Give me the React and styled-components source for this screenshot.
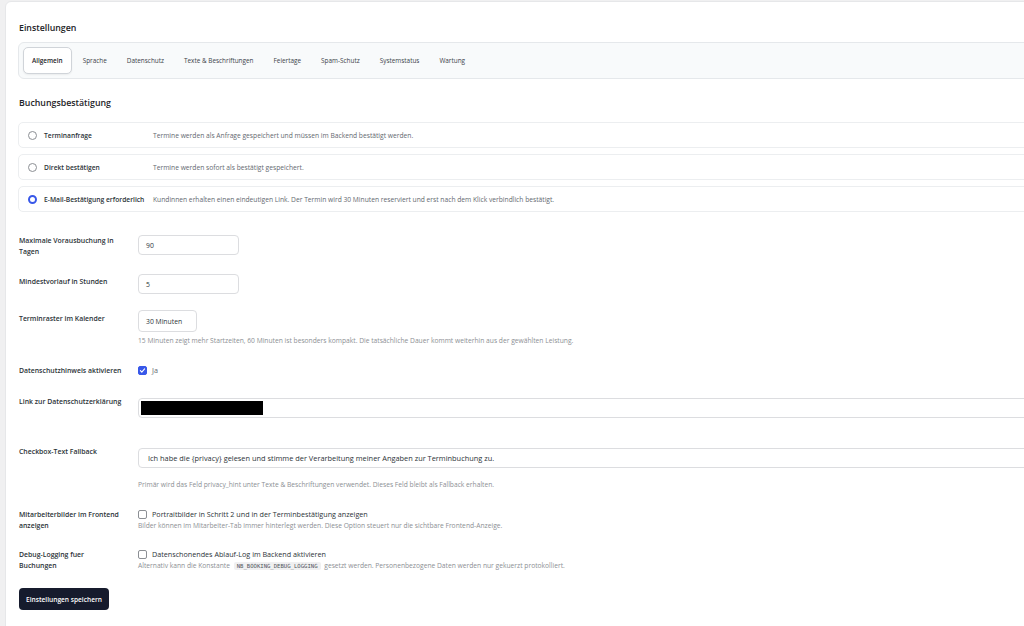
import React from "react";
import styled, { createGlobalStyle } from "styled-components";

const GlobalStyle = createGlobalStyle`
  html, body {
    margin: 0;
    padding: 0;
    background: #f0f0f1;
    overflow: hidden;
  }
  body {
    font-family: "Open Sans", "Noto Sans", sans-serif;
    color: #1d2327;
  }
`;

const tabs = [
  "Allgemein",
  "Sprache",
  "Datenschutz",
  "Texte & Beschriftungen",
  "Feiertage",
  "Spam-Schutz",
  "Systemstatus",
  "Wartung",
];

const modes = [
  {
    title: "Terminanfrage",
    text: "Termine werden als Anfrage gespeichert und müssen im Backend bestätigt werden.",
  },
  {
    title: "Direkt bestätigen",
    text: "Termine werden sofort als bestätigt gespeichert.",
  },
  {
    title: "E-Mail-Bestätigung erforderlich",
    text: "Kundinnen erhalten einen eindeutigen Link. Der Termin wird 30 Minuten reserviert und erst nach dem Klick verbindlich bestätigt.",
    checked: true,
  },
];

const Check = () => (
  <svg width="7" height="7" viewBox="0 0 10 10" fill="none">
    <path d="M2 5.2l2 2L8 2.8" stroke="#fff" strokeWidth="1.6" strokeLinecap="round" strokeLinejoin="round" />
  </svg>
);

export default function App() {
  return (
    <Page>
      <GlobalStyle />
      <Panel>
        <Title>Einstellungen</Title>
        <TabBar>
          {tabs.map((t, i) => (
            <Tab key={t} $active={i === 0}>
              {t}
            </Tab>
          ))}
        </TabBar>

        <SectionTitle>Buchungsbestätigung</SectionTitle>
        <ModeList>
          {modes.map((m) => (
            <ModeCard key={m.title}>
              <Radio $checked={m.checked} />
              <ModeTitle>{m.title}</ModeTitle>
              <ModeText>{m.text}</ModeText>
            </ModeCard>
          ))}
        </ModeList>

        <Form>
          <Row $top={23}>
            <Label>Maximale Vorausbuchung in Tagen</Label>
            <Field>
              <Input $width={101}>90</Input>
            </Field>
          </Row>
          <Row $top={17}>
            <Label $mt={2}>Mindestvorlauf in Stunden</Label>
            <Field>
              <Input $width={101}>5</Input>
            </Field>
          </Row>
          <Row $top={16}>
            <Label $mt={3}>Terminraster im Kalender</Label>
            <Field>
              <Select>30 Minuten</Select>
              <Help $gap={4}>
                15 Minuten zeigt mehr Startzeiten, 60 Minuten ist besonders kompakt. Die tatsächliche Dauer kommt weiterhin aus der gewählten Leistung.
              </Help>
            </Field>
          </Row>
          <Row $top={20}>
            <Label>Datenschutzhinweis aktivieren</Label>
            <Field>
              <CheckLine>
                <Box $checked>
                  <Check />
                </Box>
                <CheckText $muted>Ja</CheckText>
              </CheckLine>
            </Field>
          </Row>
          <Row $top={22}>
            <Label $mt={-2}>Link zur Datenschutzerklärung</Label>
            <Field>
              <Input>
                <Redacted />
              </Input>
            </Field>
          </Row>
          <Row $top={30}>
            <Label $mt={-2}>Checkbox-Text Fallback</Label>
            <Field>
              <Input $pad={9} $wide>
                Ich habe die {"{privacy}"} gelesen und stimme der Verarbeitung meiner Angaben zur Terminbuchung zu.
              </Input>
              <Help $gap={12}>
                Primär wird das Feld privacy_hint unter Texte &amp; Beschriftungen verwendet. Dieses Feld bleibt als Fallback erhalten.
              </Help>
            </Field>
          </Row>
          <Row $top={20}>
            <Label>Mitarbeiterbilder im Frontend anzeigen</Label>
            <Field>
              <CheckLine>
                <Box />
                <CheckText>Portraitbilder in Schritt 2 und in der Terminbestätigung anzeigen</CheckText>
              </CheckLine>
              <Help $gap={2}>
                Bilder können im Mitarbeiter-Tab immer hinterlegt werden. Diese Option steuert nur die sichtbare Frontend-Anzeige.
              </Help>
            </Field>
          </Row>
          <Row $top={18}>
            <Label>
              Debug-Logging fuer
              <br />
              Buchungen
            </Label>
            <Field>
              <CheckLine>
                <Box />
                <CheckText>Datenschonendes Ablauf-Log im Backend aktivieren</CheckText>
              </CheckLine>
              <Help $gap={2}>
                Alternativ kann die Konstante <Code>NB_BOOKING_DEBUG_LOGGING</Code> gesetzt werden. Personenbezogene Daten werden nur gekuerzt protokolliert.
              </Help>
            </Field>
          </Row>
        </Form>

        <SaveButton>Einstellungen speichern</SaveButton>
      </Panel>
    </Page>
  );
}

const Page = styled.div`
  width: 1024px;
  height: 626px;
  overflow: hidden;
  padding: 1px 0 0 5px;
  box-sizing: border-box;
`;

const Panel = styled.div`
  width: 1060px;
  min-height: 640px;
  box-sizing: border-box;
  background: #fff;
  border: 1px solid #e6e7e9;
  border-radius: 6px;
  padding: 19px 12px 0 12px;
`;

const Title = styled.h1`
  margin: 0 0 7px 1px;
  font-size: 8.8px;
  line-height: 14px;
  font-weight: 600;
  color: #1d2327;
`;

const TabBar = styled.div`
  display: flex;
  align-items: center;
  gap: 2px;
  height: 37px;
  box-sizing: border-box;
  padding: 0 4px;
  background: #f8fafb;
  border: 1px solid #e5e8eb;
  border-radius: 6px;
`;

const Tab = styled.div`
  height: 27px;
  box-sizing: border-box;
  display: flex;
  align-items: center;
  padding: 0 8px;
  font-size: 6.4px;
  font-weight: ${(p) => (p.$active ? 600 : 400)};
  color: ${(p) => (p.$active ? "#1d2327" : "#3c434a")};
  background: ${(p) => (p.$active ? "#fff" : "transparent")};
  border: 1px solid ${(p) => (p.$active ? "#d0d4d9" : "transparent")};
  border-radius: 5px;
  box-shadow: ${(p) => (p.$active ? "0 1px 2px rgba(0,0,0,0.06)" : "none")};
`;

const SectionTitle = styled.h2`
  margin: 17px 0 12px 1px;
  font-size: 8.8px;
  line-height: 14px;
  font-weight: 600;
  color: #1d2327;
`;

const ModeList = styled.div`
  display: flex;
  flex-direction: column;
  gap: 6px;
`;

const ModeCard = styled.div`
  height: 26px;
  box-sizing: border-box;
  display: flex;
  align-items: center;
  padding: 0 9px;
  border: 1px solid #eceef0;
  border-radius: 5px;
  background: #fff;
`;

const Radio = styled.span`
  width: 9px;
  height: 9px;
  box-sizing: border-box;
  border-radius: 50%;
  flex: none;
  border: ${(p) => (p.$checked ? "2.5px solid #3858e9" : "1px solid #8c8f94")};
  background: #fff;
`;

const ModeTitle = styled.span`
  width: 109px;
  margin-left: 7px;
  flex: none;
  font-size: 6.7px;
  font-weight: 600;
  color: #2c3338;
  white-space: nowrap;
`;

const ModeText = styled.span`
  font-size: 6.7px;
  color: #646970;
  white-space: nowrap;
`;

const Form = styled.div`
  display: flex;
  flex-direction: column;
`;

const Row = styled.div`
  display: grid;
  grid-template-columns: 120px 1fr;
  align-items: start;
  margin-top: ${(p) => p.$top}px;
`;

const Label = styled.div`
  margin-top: ${(p) => p.$mt ?? 0}px;
  padding: 0 8px 0 1px;
  font-size: 6.9px;
  line-height: 11px;
  font-weight: 600;
  color: #2c3338;
`;

const Field = styled.div`
  display: flex;
  flex-direction: column;
  align-items: flex-start;
`;

const Input = styled.div`
  width: ${(p) => (p.$width ? `${p.$width}px` : "100%")};
  height: 20px;
  box-sizing: border-box;
  display: flex;
  align-items: center;
  padding-left: ${(p) => p.$pad ?? 7}px;
  border: 1px solid #dcdde0;
  border-radius: 4px;
  font-size: ${(p) => (p.$wide ? 7.4 : 6.8)}px;
  color: #2c3338;
  white-space: nowrap;
  overflow: hidden;
`;

const Select = styled(Input)`
  width: 59px;
  height: 22px;
  padding-left: 7px;
`;

const Redacted = styled.span`
  display: block;
  width: 122px;
  height: 14px;
  margin-left: -5px;
  background: #000;
`;

const Help = styled.p`
  margin: ${(p) => p.$gap}px 0 0;
  font-size: 6.7px;
  line-height: 9px;
  color: #8c8f94;
  white-space: nowrap;
`;

const CheckLine = styled.div`
  display: flex;
  align-items: center;
  gap: 5px;
  height: 10px;
`;

const Box = styled.span`
  width: 9px;
  height: 9px;
  box-sizing: border-box;
  display: flex;
  align-items: center;
  justify-content: center;
  border-radius: 2px;
  border: 1px solid ${(p) => (p.$checked ? "#3858e9" : "#8c8f94")};
  background: ${(p) => (p.$checked ? "#3858e9" : "#fff")};
`;

const CheckText = styled.span`
  font-size: 7.2px;
  color: ${(p) => (p.$muted ? "#646970" : "#2c3338")};
`;

const Code = styled.code`
  font-family: "DejaVu Sans Mono", "Liberation Mono", monospace;
  font-size: 5.6px;
  padding: 1px 3px;
  margin: 0 2px;
  background: #f0f0f1;
  color: #50575e;
  border-radius: 2px;
`;

const SaveButton = styled.button`
  display: block;
  margin: 17px 0 0 1px;
  width: 90px;
  height: 22px;
  border: none;
  border-radius: 4px;
  background: #161b2d;
  color: #fff;
  font-family: "Open Sans", "Noto Sans", sans-serif;
  font-size: 6.6px;
  font-weight: 600;
  cursor: pointer;
`;
